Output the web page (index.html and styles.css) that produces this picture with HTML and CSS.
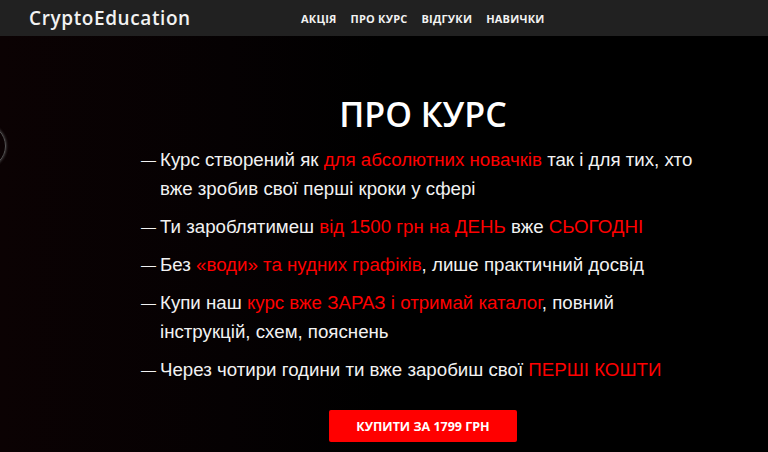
FILE: index.html
```html
<!DOCTYPE html>
<html lang="uk">
<head>
  <meta charset="UTF-8">
  <title>CryptoEducation</title>
  <meta name="viewport" content="width=device-width, initial-scale=1.0">
  <link rel="stylesheet" href="styles.css">
</head>
<body>
  <header class="topbar">
    <div class="logo">CryptoEducation</div>
    <nav class="menu">
      <a href="#">АКЦІЯ</a>
      <a href="#">ПРО КУРС</a>
      <a href="#">ВІДГУКИ</a>
      <a href="#">НАВИЧКИ</a>
    </nav>
  </header>

  <section class="about">
    <div class="orb"></div>
    <div class="about-inner">
      <h2>ПРО КУРС</h2>
      <ul class="points">
        <li><span class="dash">—</span><p>Курс створений як <span class="hl">для абсолютних новачків</span> так і для тих, хто<br>вже зробив свої перші кроки у сфері</p></li>
        <li><span class="dash">—</span><p>Ти заробляти­меш <span class="hl">від 1500 грн на ДЕНЬ</span> вже <span class="hl">СЬОГОДНІ</span></p></li>
        <li><span class="dash">—</span><p>Без <span class="hl">«води» та нудних графіків</span>, лише практичний досвід</p></li>
        <li><span class="dash">—</span><p>Купи наш <span class="hl">курс вже ЗАРАЗ і отримай каталог</span>, повний<br>інструкцій, схем, пояснень</p></li>
        <li><span class="dash">—</span><p>Через чотири години ти вже заробиш свої <span class="hl">ПЕРШІ КОШТИ</span></p></li>
      </ul>
      <button class="buy">КУПИТИ ЗА 1799 ГРН</button>
    </div>
  </section>
</body>
</html>
```

FILE: styles.css
```css
body {
  margin: 0;
  background: #000;
  font-family: "Liberation Sans", Arial, sans-serif;
  height: 452px;
  overflow: hidden;
}

.topbar {
  height: 36px;
  background: #212121;
  display: flex;
  align-items: center;
  padding-left: 29px;
}

.logo {
  font-family: "Open Sans", sans-serif;
  font-weight: 600;
  font-size: 19px;
  letter-spacing: 0.6px;
  color: #f2f2f2;
  width: 272px;
}

.menu {
  display: flex;
  gap: 14px;
}

.menu a {
  font-family: "Open Sans", sans-serif;
  font-weight: 700;
  font-size: 11px;
  letter-spacing: 0.2px;
  color: #f2f2f2;
  text-decoration: none;
}

.about {
  position: relative;
  height: 416px;
  background: linear-gradient(90deg, #0b0203 0%, #050102 30%, #000 50%);
  padding-left: 78px;
  box-sizing: border-box;
}

.orb {
  position: absolute;
  left: -38px;
  top: 88px;
  width: 42px;
  height: 42px;
  border-radius: 50%;
  border: 1px solid #555;
  box-shadow: 0 0 3px #666;
}

.about-inner {
  width: 566px;
  margin: 0 auto;
  padding-top: 58px;
  text-align: center;
}

h2 {
  margin: 0 0 11px;
  font-family: "Open Sans", sans-serif;
  font-weight: 600;
  font-size: 34px;
  line-height: 40px;
  color: #fff;
}

.points {
  list-style: none;
  margin: 0;
  padding: 0;
  text-align: left;
}

.points li {
  display: flex;
  font-size: 18.7px;
  line-height: 29px;
  color: #f2f2f2;
  margin-bottom: 9px;
}

.dash {
  flex: none;
  width: 20px;
  font-size: 15px;
  padding-left: 1px;
  box-sizing: border-box;
}

.points p {
  margin: 0;
  width: 540px;
}

.hl {
  color: #ff0000;
}

.buy {
  margin-top: 17px;
  width: 188px;
  height: 32px;
  border: none;
  border-radius: 2px;
  background: #ff0000;
  color: #fff;
  font-family: "Open Sans", sans-serif;
  font-weight: 700;
  font-size: 12.5px;
  cursor: pointer;
}
```
